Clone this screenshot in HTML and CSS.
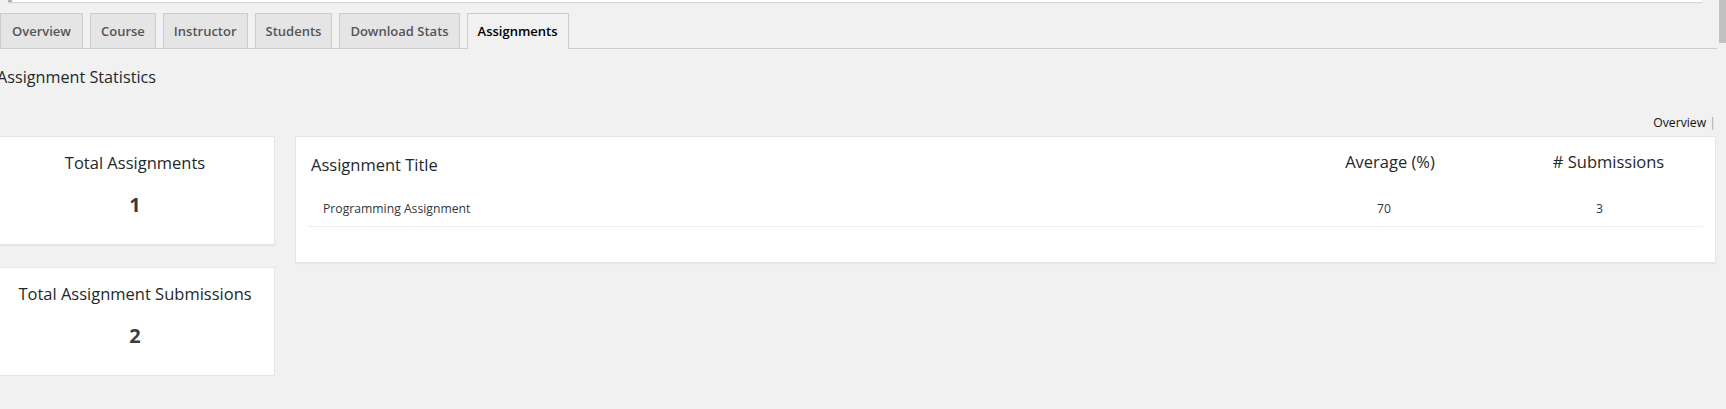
FILE: index.html
```html
<!DOCTYPE html>
<html lang="en">
<head>
<meta charset="utf-8">
<title>Assignment Statistics</title>
<link rel="stylesheet" href="styles.css">
</head>
<body>
<div class="notice"></div>
<nav class="tabs">
  <a class="tab" href="#">Overview</a>
  <a class="tab" href="#">Course</a>
  <a class="tab" href="#">Instructor</a>
  <a class="tab" href="#">Students</a>
  <a class="tab" href="#">Download Stats</a>
  <a class="tab tab-active" href="#">Assignments</a>
</nav>
<main class="content">
  <h2 class="page-title">Assignment Statistics</h2>
  <div class="sublinks"><a href="#">Overview</a> <span class="sep">|</span></div>
  <div class="stats-grid">
    <div class="stat-col">
      <div class="card stat-card">
        <h3 class="stat-title">Total Assignments</h3>
        <div class="stat-value">1</div>
      </div>
      <div class="card stat-card">
        <h3 class="stat-title">Total Assignment Submissions</h3>
        <div class="stat-value">2</div>
      </div>
    </div>
    <div class="card table-card">
      <table class="stats-table">
        <thead>
          <tr>
            <th class="col-title">Assignment Title</th>
            <th class="col-avg">Average (%)</th>
            <th class="col-sub"># Submissions</th>
          </tr>
        </thead>
        <tbody>
          <tr>
            <td class="cell-title">Programming Assignment</td>
            <td class="cell-avg">70</td>
            <td class="cell-sub">3</td>
          </tr>
        </tbody>
      </table>
    </div>
  </div>
</main>
<div class="scroll-thumb"></div>
</body>
</html>
```
FILE: styles.css
```css
html, body {
  margin: 0;
  padding: 0;
}
body {
  background: #f1f1f1;
  color: #23282d;
  font-family: "Open Sans", "Noto Sans", sans-serif;
  font-size: 12px;
  overflow: hidden;
}
a {
  text-decoration: none;
  color: inherit;
}

.notice {
  height: 30px;
  margin: -28px 24px 0 8px;
  background: #fff;
  border-left: 4px solid #c9a3d6;
  box-shadow: 0 1px 1px rgba(0, 0, 0, 0.12);
}

.tabs {
  display: flex;
  gap: 7px;
  margin: 11px 9px 0 0;
  border-bottom: 1px solid #ccc;
  height: 35px;
  align-items: flex-end;
}
.tab {
  display: block;
  padding: 5px 10px;
  line-height: 24px;
  font-size: 13px;
  font-weight: 600;
  color: #555;
  background: #e5e5e5;
  border: 1px solid #ccc;
  border-bottom: none;
  height: 24px;
}
.tab:first-child {
  padding-left: 11px;
  padding-right: 11px;
}
.tab-active {
  background: #f1f1f1;
  color: #000;
  height: 25px;
  margin-bottom: -1px;
}

.content {
  margin: 0 10px 0 -5px;
}
.page-title {
  margin: 16px 0 0 2px;
  font-size: 16.2px;
  line-height: 24px;
  font-weight: 400;
  color: #23282d;
}
.sublinks {
  margin-top: 25px;
  text-align: right;
  font-size: 12.2px;
  line-height: 18px;
  color: #111;
}
.sublinks .sep {
  color: #a0a5aa;
}

.stats-grid {
  display: grid;
  grid-template-columns: 280px 1fr;
  column-gap: 20px;
  margin-top: 4px;
  align-items: start;
}
.stat-col {
  display: flex;
  flex-direction: column;
  gap: 22px;
}
.card {
  background: #fff;
  border: 1px solid #e5e5e5;
  box-shadow: 0 1px 1px rgba(0, 0, 0, 0.04);
}
.stat-card {
  padding: 15px 0 25px;
  text-align: center;
}
.stat-title {
  margin: 0;
  font-size: 16.5px;
  line-height: 22px;
  font-weight: 400;
  color: #23282d;
}
.stat-value {
  margin-top: 17px;
  font-size: 20px;
  line-height: 28px;
  font-weight: 700;
  color: #3a3a44;
}

.table-card {
  padding: 10px 12px 35px;
}
.stats-table {
  width: 100%;
  border-collapse: collapse;
}
.stats-table th {
  font-size: 16.5px;
  line-height: 22px;
  font-weight: 400;
  color: #23282d;
  padding: 4px 3px 19px;
  vertical-align: top;
  text-align: center;
}
.stats-table th.col-title {
  text-align: left;
  padding-top: 7px;
  padding-bottom: 16px;
}
.stats-table th.col-avg {
  width: 242px;
}
.stats-table th.col-sub {
  width: 183px;
}
.stats-table td {
  font-size: 12.2px;
  line-height: 18px;
  color: #32373c;
  padding: 8px 3px;
  border-bottom: 1px solid #eee;
  text-align: center;
}
.stats-table td.cell-title {
  text-align: left;
  padding-left: 15px;
}
.stats-table td.cell-avg {
  padding-right: 15px;
}
.stats-table td.cell-sub {
  padding-right: 21px;
}

.scroll-thumb {
  position: fixed;
  top: 0;
  right: 0;
  width: 7px;
  height: 43px;
  background: #c1c1c1;
}
```
